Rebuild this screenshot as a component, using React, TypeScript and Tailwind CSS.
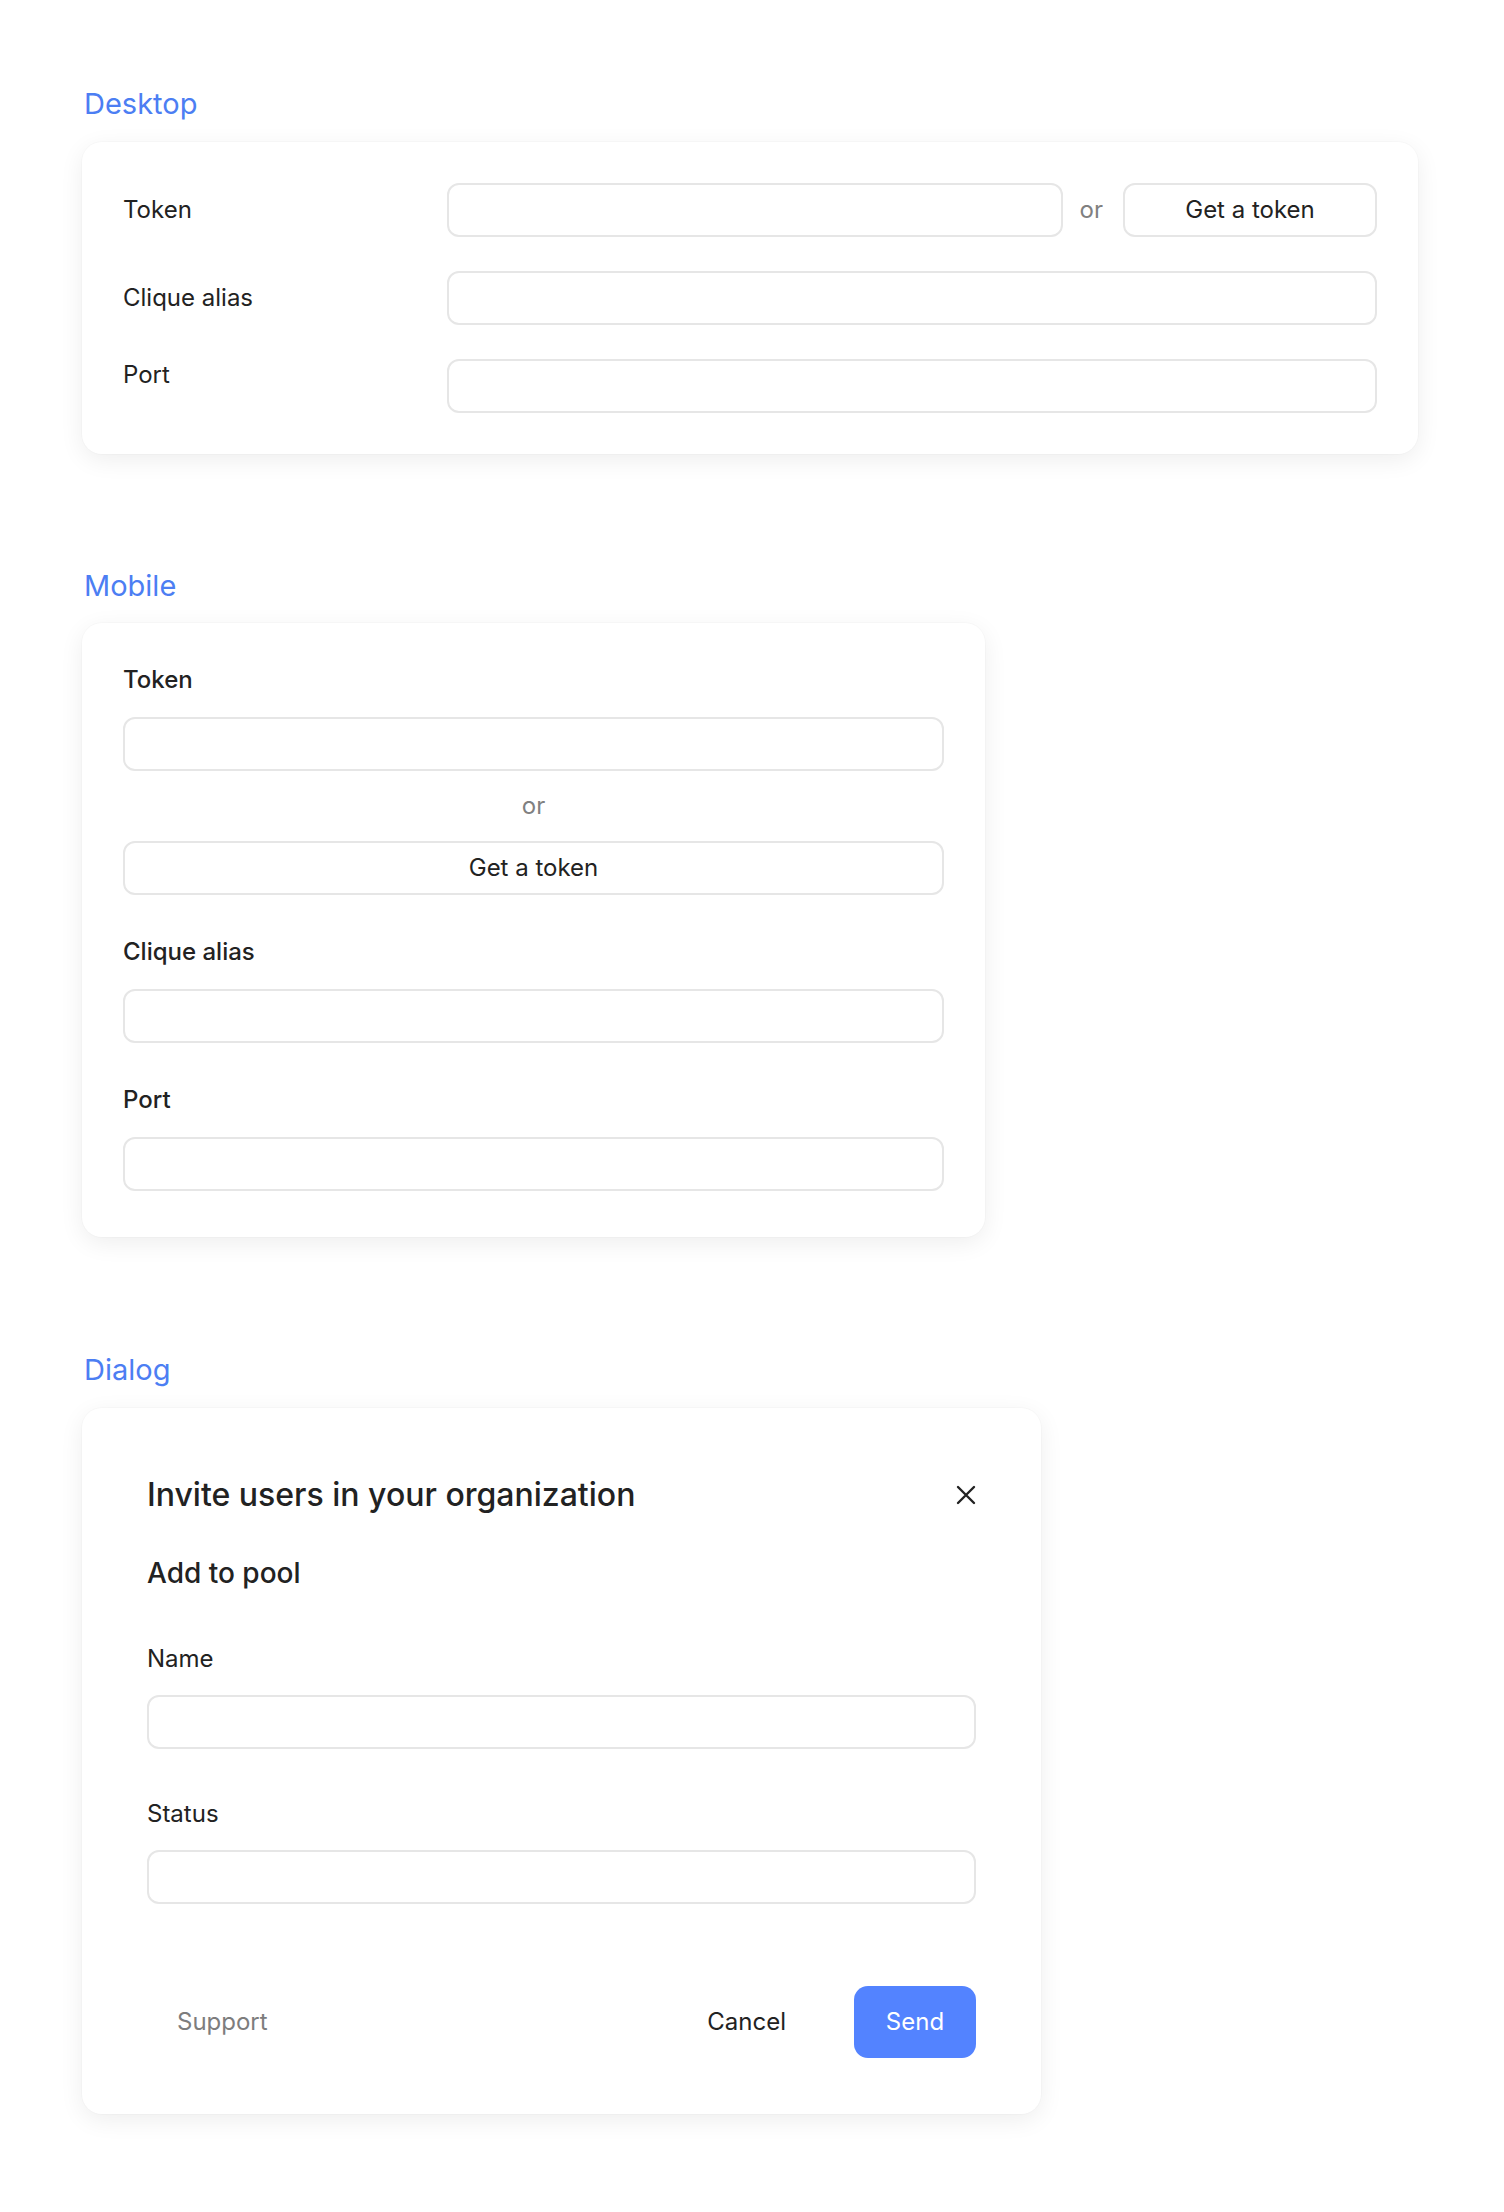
function Field({ className = "" }: { className?: string }) {
  return (
    <input
      type="text"
      className={`block h-[54px] w-full rounded-xl border-2 border-[#e6e6e6] bg-white px-4 text-[24px] outline-none ${className}`}
    />
  );
}

function TokenButton({ className = "" }: { className?: string }) {
  return (
    <button className={`flex h-[54px] items-center justify-center rounded-xl border-2 border-[#e6e6e6] bg-white text-[24px] leading-8 text-[#222] ${className}`}>
      Get a token
    </button>
  );
}

function SectionTitle({ children }: { children: React.ReactNode }) {
  return <h2 className="pl-[2px] text-[29px] leading-9 text-[#4c7ef3]">{children}</h2>;
}

const card = "rounded-[20px] bg-white shadow-[0_0_0_1px_rgba(0,0,0,0.015),0_6px_24px_rgba(0,0,0,0.07)]";

export default function App() {
  return (
    <div className="min-h-screen bg-white px-[82px] pt-[86px] pb-[100px] font-['Inter',sans-serif] text-[#222]">
      {/* Desktop */}
      <section>
        <SectionTitle>Desktop</SectionTitle>
        <div className={`mt-[20px] w-[1336px] p-[41px] ${card}`}>
          <div className="flex flex-col gap-[34px]">
            <div className="flex items-center">
              <span className="w-[324px] shrink-0 text-[24px] leading-8">Token</span>
              <Field className="flex-1" />
              <span className="ml-[17px] mr-[20px] text-[24px] leading-8 text-[#808080]">or</span>
              <TokenButton className="w-[254px] shrink-0" />
            </div>
            <div className="flex items-center">
              <span className="w-[324px] shrink-0 text-[24px] leading-8">Clique alias</span>
              <Field className="flex-1" />
            </div>
            <div className="flex items-start">
              <span className="w-[324px] shrink-0 text-[24px] leading-8">Port</span>
              <Field className="flex-1" />
            </div>
          </div>
        </div>
      </section>

      {/* Mobile */}
      <section className="mt-[114px]">
        <SectionTitle>Mobile</SectionTitle>
        <div className={`mt-[19px] w-[903px] px-[41px] pt-[41px] pb-[46px] ${card}`}>
          <p className="text-[24px] font-medium leading-8">Token</p>
          <Field className="mt-[21px]" />
          <p className="my-[19px] text-center text-[24px] leading-8 text-[#808080]">or</p>
          <TokenButton className="w-full" />
          <p className="mt-[41px] text-[24px] font-medium leading-8">Clique alias</p>
          <Field className="mt-[21px]" />
          <p className="mt-[41px] text-[24px] font-medium leading-8">Port</p>
          <Field className="mt-[21px]" />
        </div>
      </section>

      {/* Dialog */}
      <section className="mt-[115px]">
        <SectionTitle>Dialog</SectionTitle>
        <div className={`mt-[20px] w-[959px] px-[65px] pt-[67px] pb-[56px] ${card}`}>
          <div className="flex items-center justify-between">
            <h3 className="text-[32px] font-medium leading-10">Invite users in your organization</h3>
            <button className="flex h-[20px] w-[20px] items-center justify-center text-[#222]">
              <svg viewBox="0 0 20 20" className="h-[20px] w-[20px]" fill="none" stroke="currentColor" strokeWidth={2.4} strokeLinecap="round">
                <path d="M2 2l16 16M18 2L2 18" />
              </svg>
            </button>
          </div>
          <h4 className="mt-[40px] text-[28px] font-medium leading-9">Add to pool</h4>
          <p className="mt-[52px] text-[24px] leading-8">Name</p>
          <Field className="mt-[20px]" />
          <p className="mt-[49px] text-[24px] leading-8">Status</p>
          <Field className="mt-[20px]" />
          <div className="mt-[82px] flex items-center">
            <button className="h-[72px] px-[30px] text-[24px] text-[#7d7d7d]">Support</button>
            <div className="flex-1" />
            <button className="h-[72px] px-[32px] text-[24px] text-[#222]">Cancel</button>
            <button className="ml-[36px] h-[72px] w-[122px] rounded-[14px] bg-[#5383ff] text-[24px] text-white">
              Send
            </button>
          </div>
        </div>
      </section>
    </div>
  );
}
